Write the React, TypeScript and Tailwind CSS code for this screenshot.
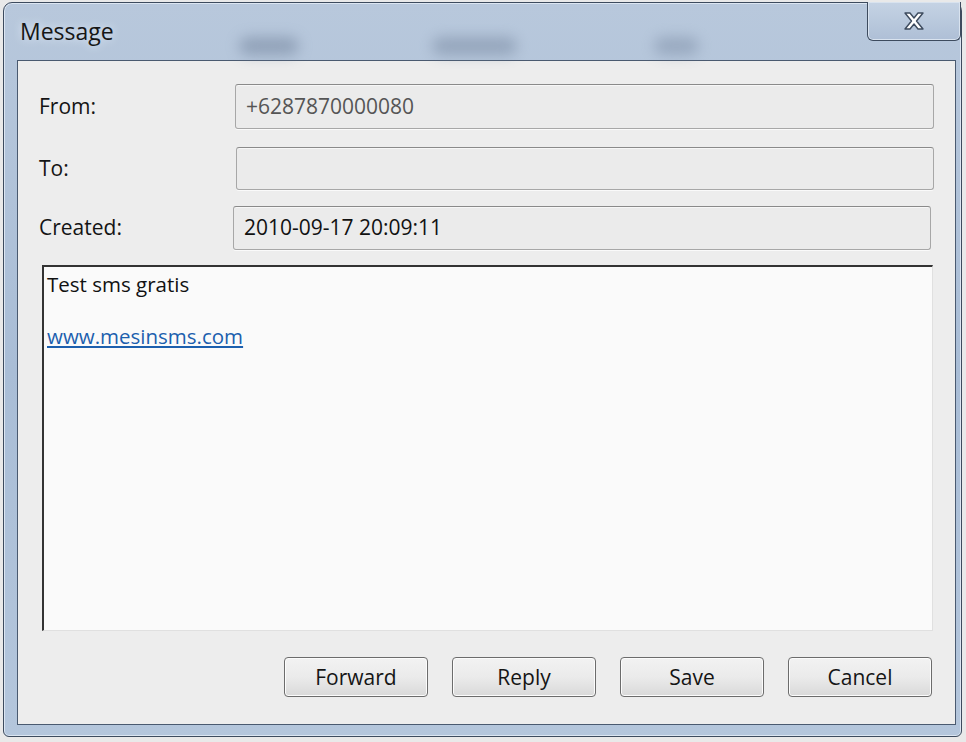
const font = { fontFamily: '"Open Sans", "Noto Sans", sans-serif' };

const Field = ({ value, muted, className }: { value?: string; muted?: boolean; className: string }) => (
    <div className={`flex items-center rounded-[3px] border border-[#a7a7a7] border-t-[#8a8a8a] bg-[#ebebeb] px-[10px] text-[21px] shadow-[inset_0_1px_0_#f7f7f7,0_1px_0_#fafafa] ${muted ? 'text-[#555555]' : 'text-[#111111]'} ${className}`}>
        {value}
    </div>
);

const Button = ({ label }: { label: string }) => (
    <button className="flex h-[40px] w-[144px] items-center justify-center rounded-[4px] border border-[#6c6c6c] bg-gradient-to-b from-[#f2f2f2] via-[#ebebeb] to-[#d9d9d9] pt-[2px] text-[21px] text-[#151515] shadow-[inset_0_0_0_1px_#fcfcfc]">
        {label}
    </button>
);

export default function App() {
    return (
        <div className="h-[742px] w-[966px] overflow-hidden bg-[#e9e9e9]" style={font}>
            <div className="relative ml-[3px] mt-[2px] flex h-[735px] w-[959px] flex-col rounded-t-[9px] rounded-b-[6px] border border-[#3d4b5e] bg-gradient-to-b from-[#b8c8dc] via-[#a9bdd6] to-[#b4c6dc] shadow-[inset_0_0_0_1px_#dce6f2]">
                {/* blurred glass smudges */}
                <div className="absolute left-[235px] top-[34px] h-[18px] w-[60px] rounded-full bg-[#6c7d96] opacity-50 blur-[7px]"></div>
                <div className="absolute left-[428px] top-[34px] h-[18px] w-[85px] rounded-full bg-[#6c7d96] opacity-45 blur-[7px]"></div>
                <div className="absolute left-[650px] top-[34px] h-[18px] w-[45px] rounded-full bg-[#6c7d96] opacity-40 blur-[7px]"></div>

                <div className="flex h-[57px] items-start justify-between">
                    <div className="ml-[16px] mt-[17px] text-[23px] leading-none text-[#161616] [text-shadow:0_0_8px_#e8f0fa]">Message</div>
                    <div className="-mt-px flex h-[39px] w-[94px] items-center justify-center rounded-b-[6px] border border-t-0 border-[#3d4b5e] bg-gradient-to-b from-[#c5d3e4] to-[#aebfd6] shadow-[inset_0_0_0_1px_#d9e3ef]">
                        <svg width="26" height="20" viewBox="0 0 26 20">
                            <path d="M4 2 L9 2 L13 7 L17 2 L22 2 L15.5 10 L22 18 L17 18 L13 13 L9 18 L4 18 L10.5 10 Z" fill="#ffffff" stroke="#3d4b5e" strokeWidth="1.4" strokeLinejoin="round" />
                        </svg>
                    </div>
                </div>

                <div className="ml-[13px] flex h-[665px] w-[939px] flex-col border border-[#4a5a70] bg-[#ededed] pl-[21px] pt-[23px]">
                    <div className="flex items-center">
                        <div className="w-[196px] text-[21px] text-[#141414]">From:</div>
                        <Field value="+6287870000080" muted className="h-[45px] w-[699px]" />
                    </div>
                    <div className="mt-[18px] flex items-center">
                        <div className="w-[197px] text-[21px] text-[#141414]">To:</div>
                        <Field className="h-[43px] w-[698px]" />
                    </div>
                    <div className="mt-[16px] flex items-center">
                        <div className="w-[194px] text-[21px] text-[#141414]">Created:</div>
                        <Field value="2010-09-17 20:09:11" className="h-[44px] w-[698px]" />
                    </div>

                    <div className="ml-[3px] mt-[15px] flex h-[366px] w-[891px] flex-col border-l-2 border-t-2 border-[#333333] border-r border-b border-r-[#e0e0e0] border-b-[#e0e0e0] bg-[#fafafa] px-[3px] pt-[4px] text-[20.5px] leading-[26px] text-[#111111]">
                        <div>Test sms gratis</div>
                        <div className="mt-[26px]">
                            <a href="#" className="text-[#1c5fae] underline">www.mesinsms.com</a>
                        </div>
                    </div>

                    <div className="ml-[245px] mt-[26px] flex gap-[24px]">
                        <Button label="Forward" />
                        <Button label="Reply" />
                        <Button label="Save" />
                        <Button label="Cancel" />
                    </div>
                </div>
            </div>
        </div>
    );
}
